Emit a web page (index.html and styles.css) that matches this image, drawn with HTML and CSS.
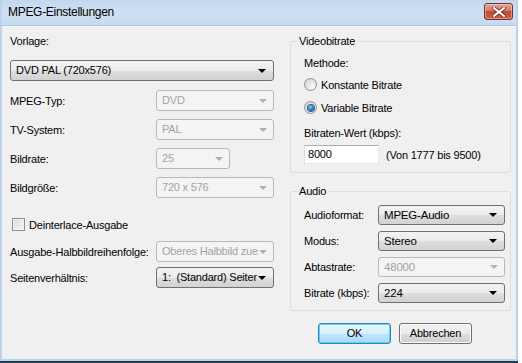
FILE: index.html
```html
<!DOCTYPE html>
<html lang="de">
<head>
  <meta charset="UTF-8">
  <title>MPEG-Einstellungen</title>
  <link rel="stylesheet" href="styles.css">
</head>
<body>
  <div class="window">
    <div class="titlebar">
      <span class="title">MPEG-Einstellungen</span>
      <div class="close">
        <svg width="14" height="10" viewBox="0 0 14 10">
          <path d="M2 1 L12 9 M12 1 L2 9" stroke="#6b2a22" stroke-width="3.6" stroke-linecap="square"/>
          <path d="M2 1 L12 9 M12 1 L2 9" stroke="#ffffff" stroke-width="2" stroke-linecap="square"/>
        </svg>
      </div>
    </div>

    <div class="client">
      <!-- Left column -->
      <div class="left">
        <div class="caption">Vorlage:</div>
        <div class="combo full">DVD PAL (720x576)<span class="arrow"></span></div>

        <div class="row first">
          <span>MPEG-Typ:</span>
          <div class="combo disabled">DVD<span class="arrow"></span></div>
        </div>
        <div class="row">
          <span>TV-System:</span>
          <div class="combo disabled">PAL<span class="arrow"></span></div>
        </div>
        <div class="row">
          <span>Bildrate:</span>
          <div class="combo disabled short">25<span class="arrow"></span></div>
        </div>
        <div class="row">
          <span>Bildgröße:</span>
          <div class="combo disabled">720 x 576<span class="arrow"></span></div>
        </div>

        <label class="check">
          <span class="box"></span>
          Deinterlace-Ausgabe
        </label>

        <div class="row after-check">
          <span>Ausgabe-Halbbildreihenfolge:</span>
          <div class="combo disabled">Oberes Halbbild zue<span class="arrow"></span></div>
        </div>
        <div class="row tight">
          <span>Seitenverhältnis:</span>
          <div class="combo">1:&nbsp; (Standard) Seiter<span class="arrow"></span></div>
        </div>
      </div>

      <!-- Right column -->
      <div class="right">
        <fieldset class="group video">
          <legend>Videobitrate</legend>
          <div class="caption">Methode:</div>
          <div class="radio"><span class="dot"></span>Konstante Bitrate</div>
          <div class="radio"><span class="dot on"></span>Variable Bitrate</div>
          <div class="caption value">Bitraten-Wert (kbps):</div>
          <div class="input-row">
            <div class="input">8000</div>
            <span>(Von 1777 bis 9500)</span>
          </div>
        </fieldset>

        <fieldset class="group audio">
          <legend>Audio</legend>
          <div class="arow">
            <span>Audioformat:</span>
            <div class="combo">MPEG-Audio<span class="arrow"></span></div>
          </div>
          <div class="arow">
            <span>Modus:</span>
            <div class="combo">Stereo<span class="arrow"></span></div>
          </div>
          <div class="arow">
            <span>Abtastrate:</span>
            <div class="combo disabled">48000<span class="arrow"></span></div>
          </div>
          <div class="arow">
            <span>Bitrate (kbps):</span>
            <div class="combo">224<span class="arrow"></span></div>
          </div>
        </fieldset>

        <div class="buttons">
          <div class="button default">OK</div>
          <div class="button">Abbrechen</div>
        </div>
      </div>
    </div>
  </div>
</body>
</html>
```

FILE: styles.css
```css
/* General Reset */
* {
  margin: 0;
  padding: 0;
  box-sizing: border-box;
}

body {
  font-family: 'Liberation Sans', Arial, sans-serif;
  font-size: 11px;
  letter-spacing: -0.2px;
  color: #000;
  background: #ffffff;
  width: 522px;
  height: 363px;
  overflow: hidden;
}

/* Window frame */
.window {
  width: 518px;
  height: 361px;
  background: #f0f0f0;
  border-left: 2px solid #bcd2ea;
  border-right: 2px solid #bcd2ea;
  border-bottom: 2px solid #bcd2ea;
  box-shadow: 0 2px 0 #1d3f58;
}

.titlebar {
  height: 26px;
  display: flex;
  align-items: center;
  justify-content: space-between;
  padding: 0 3px 2px 6px;
  background: linear-gradient(#c4d7ee, #cfe0f3 45%, #c6daf0);
  border-bottom: 1px solid #a9c1dc;
}

.title {
  font-size: 12px;
  letter-spacing: -0.3px;
  color: #000;
}

.close {
  width: 29px;
  height: 17px;
  border: 1px solid #6e3328;
  border-radius: 3px;
  display: flex;
  justify-content: center;
  align-items: center;
  background: linear-gradient(#e3a596, #d27a66 45%, #c04a33 50%, #cc624c);
  box-shadow: inset 0 0 0 1px rgba(255, 255, 255, 0.35);
}

.client {
  display: flex;
  gap: 16px;
  padding: 0 0 0 8px;
  border-top: 1px solid #f8fbfe;
}

/* Left column */
.left {
  width: 264px;
  padding-top: 8px;
}

.caption {
  line-height: 13px;
}

.left .caption {
  margin-bottom: 12px;
}

.row {
  display: flex;
  align-items: center;
  justify-content: space-between;
  margin-top: 8px;
}

.row.first {
  margin-top: 9px;
}

.row.after-check {
  margin-top: 10px;
}

.row.tight {
  margin-top: 5px;
}

/* Combo boxes */
.combo {
  position: relative;
  width: 118px;
  height: 21px;
  line-height: 19px;
  padding-left: 5px;
  border: 1px solid #707070;
  border-radius: 3px;
  background: linear-gradient(#f3f3f3, #ebebeb 50%, #dedede 51%, #d2d2d2);
  white-space: nowrap;
  overflow: hidden;
}

.combo.full {
  width: 264px;
}

.combo.short {
  width: 74px;
  margin-right: 44px;
}

.combo.disabled {
  border-color: #b8b8b8;
  background: #f4f4f4;
  color: #a3a3a3;
}

.arrow {
  position: absolute;
  right: 7px;
  top: 8px;
  width: 0;
  height: 0;
  border-left: 4px solid transparent;
  border-right: 4px solid transparent;
  border-top: 4px solid #000;
}

.combo.disabled .arrow {
  right: 6px;
  border-top-color: #b0b0b0;
}

/* Checkbox */
.check {
  display: flex;
  align-items: center;
  gap: 4px;
  margin-top: 20px;
  margin-left: 2px;
  height: 13px;
}

.box {
  width: 13px;
  height: 13px;
  border: 1px solid #8e8f8f;
  background: linear-gradient(135deg, #d9d9d9, #f7f7f7);
  box-shadow: inset 0 0 0 1px #f4f4f4;
}

/* Right column */
.right {
  width: 221px;
}

.group {
  border: 1px solid #d5dfe5;
  border-radius: 3px;
  padding: 0 6px 0 13px;
}

.group legend {
  margin-left: -6px;
  padding: 0 2px 0 1px;
  line-height: 13px;
}

.video {
  margin-top: 8px;
  height: 138px;
  padding-top: 9px;
}

.radio {
  display: flex;
  align-items: center;
  gap: 4px;
  height: 13px;
  margin-top: 8px;
}

.radio + .radio {
  margin-top: 10px;
}

.dot {
  width: 13px;
  height: 13px;
  border-radius: 50%;
  border: 1px solid #8f9191;
  background: radial-gradient(circle at 65% 70%, #fbfbfb, #d6d6d6 80%);
  display: flex;
  justify-content: center;
  align-items: center;
}

.dot.on::after {
  content: "";
  width: 6px;
  height: 6px;
  border-radius: 50%;
  background: radial-gradient(circle at 40% 35%, #7fd2f7, #1c7ab8 55%, #0f3f73);
  box-shadow: 0 0 0 1px #35607f;
}

.caption.value {
  margin-top: 13px;
}

.input-row {
  display: flex;
  align-items: center;
  gap: 7px;
  margin-top: 5px;
}

.input {
  width: 75px;
  height: 19px;
  line-height: 17px;
  padding-left: 3px;
  background: #fff;
  border: 1px solid #e3e9ef;
  border-top-color: #abadb3;
  border-left-color: #dbdfe6;
}

.audio {
  margin-top: 12px;
  height: 126px;
  padding-top: 7px;
  padding-right: 5px;
}

.arow {
  display: flex;
  align-items: center;
  justify-content: space-between;
  margin-bottom: 6px;
}

.arow .combo {
  width: 127px;
  height: 20px;
  line-height: 18px;
  font-size: 11.5px;
}

.arow .arrow {
  top: 7px;
}

/* Buttons */
.buttons {
  display: flex;
  gap: 8px;
  margin-top: 12px;
  padding-left: 28px;
}

.button {
  width: 73px;
  height: 21px;
  line-height: 19px;
  text-align: center;
  border: 1px solid #707070;
  border-radius: 3px;
  background: linear-gradient(#f2f2f2, #ebebeb 50%, #dddddd 51%, #cfcfcf);
  box-shadow: inset 0 0 0 1px #fcfcfc;
}

.button.default {
  border-color: #3c7fb1;
  background: linear-gradient(#eaf6fd, #d9f0fc 50%, #bee6fd 51%, #a7d9f5);
  box-shadow: inset 0 0 0 1px #48d9ff;
}
```
